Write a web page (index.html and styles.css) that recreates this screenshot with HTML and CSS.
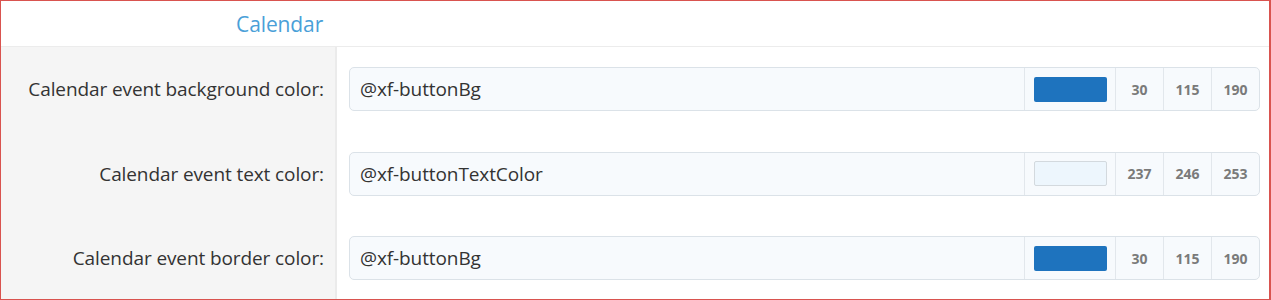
FILE: index.html
```html
<!DOCTYPE html>
<html lang="en">
<head>
  <meta charset="UTF-8">
  <meta name="viewport" content="width=device-width, initial-scale=1.0">
  <title>Style properties: Calendar</title>
  <link rel="stylesheet" href="styles.css">
</head>
<body>
  <div class="frame">
    <div class="group-header">
      <h2>Calendar</h2>
    </div>

    <div class="form-row">
      <label class="row-label">Calendar event background color:</label>
      <div class="row-field">
        <div class="color-input">
          <input type="text" value="@xf-buttonBg">
          <div class="swatch-cell"><span class="swatch swatch-blue"></span></div>
          <div class="rgb-cell">30</div>
          <div class="rgb-cell">115</div>
          <div class="rgb-cell">190</div>
        </div>
      </div>
    </div>

    <div class="form-row">
      <label class="row-label">Calendar event text color:</label>
      <div class="row-field">
        <div class="color-input">
          <input type="text" value="@xf-buttonTextColor">
          <div class="swatch-cell"><span class="swatch swatch-light"></span></div>
          <div class="rgb-cell">237</div>
          <div class="rgb-cell">246</div>
          <div class="rgb-cell">253</div>
        </div>
      </div>
    </div>

    <div class="form-row">
      <label class="row-label">Calendar event border color:</label>
      <div class="row-field">
        <div class="color-input">
          <input type="text" value="@xf-buttonBg">
          <div class="swatch-cell"><span class="swatch swatch-blue"></span></div>
          <div class="rgb-cell">30</div>
          <div class="rgb-cell">115</div>
          <div class="rgb-cell">190</div>
        </div>
      </div>
    </div>
  </div>
</body>
</html>
```

FILE: styles.css
```css
* {
  margin: 0;
  padding: 0;
  box-sizing: border-box;
}

body {
  font-family: 'Open Sans', 'Noto Sans', Arial, sans-serif;
  background: #fff;
  color: #333;
}

.frame {
  width: 1271px;
  height: 300px;
  border: 1px solid #d9534f;
  border-right-width: 2px;
  overflow: hidden;
  display: flex;
  flex-direction: column;
  background: linear-gradient(to right, #f5f5f5 0, #f5f5f5 334px, #ebebeb 334px, #ebebeb 336px, #fff 336px);
}

.group-header {
  height: 46px;
  flex-shrink: 0;
  background: #fff;
  border-bottom: 1px solid #ececec;
  padding-left: 235px;
  display: flex;
  align-items: center;
}

.group-header h2 {
  font-size: 21px;
  font-weight: 400;
  color: #4aa0d8;
  letter-spacing: -0.1px;
}

.form-row {
  flex-shrink: 0;
  display: flex;
  align-items: center;
  padding: 20px 0 20.5px;
}

.row-label {
  width: 335px;
  flex-shrink: 0;
  text-align: right;
  padding-right: 12px;
  font-size: 19px;
  color: #333;
  letter-spacing: -0.1px;
}

.row-field {
  flex: 1;
  padding: 0 9px 0 13px;
}

.color-input {
  display: flex;
  height: 44px;
  border: 1px solid #dbe2e8;
  border-radius: 5px;
  background: #f7fafd;
  overflow: hidden;
}

.color-input input {
  flex: 1;
  min-width: 0;
  border: none;
  outline: none;
  background: transparent;
  padding: 0 10px;
  font-family: inherit;
  font-size: 19px;
  color: #333;
  letter-spacing: -0.1px;
}

.swatch-cell {
  width: 91px;
  border-left: 1px solid #e2e7ec;
  display: flex;
  align-items: center;
  justify-content: center;
}

.swatch {
  width: 73px;
  height: 25px;
  border-radius: 2px;
}

.swatch-blue {
  background: #1e73be;
}

.swatch-light {
  background: #edf6fd;
  border: 1px solid #d3d9de;
}

.rgb-cell {
  width: 48px;
  border-left: 1px solid #e2e7ec;
  display: flex;
  align-items: center;
  justify-content: center;
  font-size: 14px;
  font-weight: 700;
  color: #7a7a7a;
}
```
